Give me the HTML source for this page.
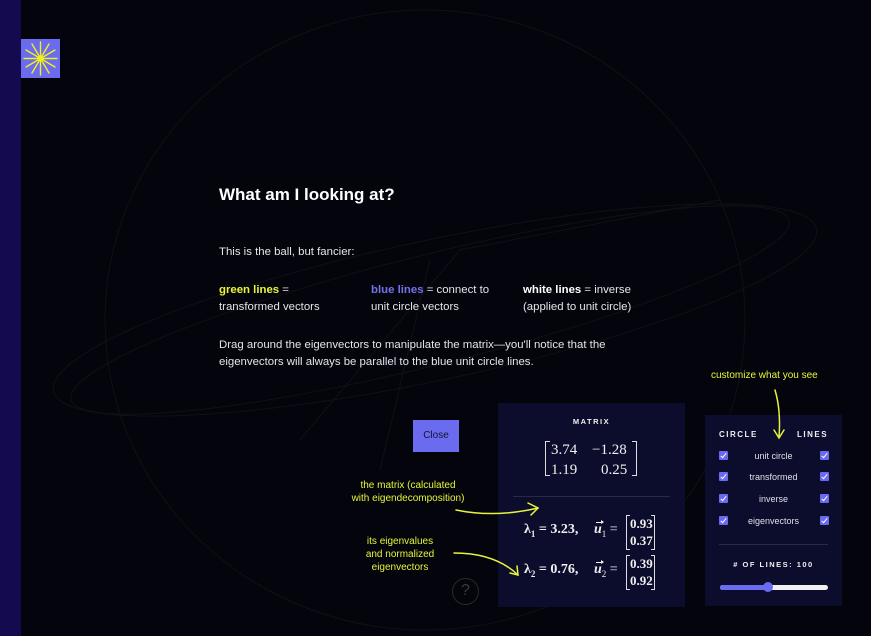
<!DOCTYPE html>
<html><head><meta charset="utf-8"><style>
*{margin:0;padding:0;box-sizing:border-box}
body{width:871px;height:636px;background:#04040c;position:relative;overflow:hidden;font-family:"Liberation Sans","DejaVu Sans",sans-serif;color:#e8e8f0}
.a{position:absolute}
.t{font-size:11.4px;line-height:17px;color:#e4e4ea}
.y{color:#e6f53a}
.b{color:#7373f0}
.serif{font-family:"Liberation Serif","DejaVu Serif",serif;color:#f0f0f0;white-space:nowrap}
.cb{position:absolute;width:9px;height:9px;background:#6a6af0;border-radius:1px}
.cb:after{content:"";position:absolute;left:3px;top:1px;width:2px;height:5px;border:solid #fff;border-width:0 1.5px 1.5px 0;transform:rotate(40deg)}
.lbl{position:absolute;font-size:9px;color:#e0e0e8;width:137px;text-align:center;left:0}
.cap{font-size:8px;font-weight:bold;letter-spacing:1.5px;color:#f0f0f0}
.brk{position:absolute;border:1px solid #ddd}
.u{position:relative;font-style:italic;font-weight:bold}
.u:before{content:"";position:absolute;left:2px;top:0px;width:7px;height:1px;background:#f0f0f0}
.u:after{content:"";position:absolute;left:7px;top:-2px;border-left:3px solid #f0f0f0;border-top:2.5px solid transparent;border-bottom:2.5px solid transparent}
</style></head><body>
<div class="a" style="left:0;top:0;width:21px;height:636px;background:#130a50"></div>
<svg class="a" style="left:0;top:0" width="871" height="636">
<g fill="none" stroke="#101016" stroke-width="1">
<ellipse cx="425" cy="320" rx="320" ry="310"/>
<ellipse cx="435" cy="310" rx="390" ry="70" transform="rotate(-12 435 310)"/>
<ellipse cx="430" cy="310" rx="370" ry="55" transform="rotate(-14 430 310)"/>
<path d="M300 440 L460 250 L720 200 M380 470 L430 260"/>
</g>
</svg>
<div class="a" style="left:21px;top:39px;width:39px;height:39px;background:#6b6bf0">
<svg width="39" height="39" viewBox="0 0 39 39"><g stroke="#f0f020" stroke-width="1.4" stroke-linecap="round">
<line x1="19.5" y1="3" x2="19.5" y2="36"/><line x1="3" y1="19.5" x2="36" y2="19.5"/>
<line x1="11" y1="5" x2="28" y2="34"/><line x1="28" y1="5" x2="11" y2="34"/>
<line x1="5" y1="11" x2="34" y2="28"/><line x1="34" y1="11" x2="5" y2="28"/>
</g><circle cx="19.5" cy="19.5" r="3" fill="#f0f020"/></svg></div>

<div class="a" style="left:219px;top:185px;font-size:17px;font-weight:bold;color:#fff">What am I looking at?</div>
<div class="a t" style="left:219px;top:244px">This is the ball, but fancier:</div>
<div class="a t" style="left:219px;top:282px"><b class="y">green lines</b> =<br>transformed vectors</div>
<div class="a t" style="left:371px;top:282px"><b class="b">blue lines</b> = connect to<br>unit circle vectors</div>
<div class="a t" style="left:523px;top:282px"><b style="color:#fff">white lines</b> = inverse<br>(applied to unit circle)</div>
<div class="a t" style="left:219px;top:337px;white-space:nowrap">Drag around the eigenvectors to manipulate the matrix—you'll notice that the<br>eigenvectors will always be parallel to the blue unit circle lines.</div>

<div class="a" style="left:413px;top:420px;width:46px;height:32px;background:#6b6bf0;color:#141430;font-size:10px;text-align:center;line-height:32px">Close</div>

<div class="a y" style="left:338px;top:479px;width:140px;text-align:center;font-size:10px;line-height:13px">the matrix (calculated<br>with eigendecomposition)</div>
<div class="a y" style="left:345px;top:535px;width:110px;text-align:center;font-size:10px;line-height:13px">its eigenvalues<br>and normalized<br>eigenvectors</div>
<div class="a y" style="left:711px;top:370px;font-size:10px">customize what you see</div>

<div class="a" style="left:452px;top:578px;width:27px;height:27px;border:1.5px solid #2a2a2a;border-radius:50%;color:#3a3a3a;font-size:16px;text-align:center;line-height:24px">?</div>

<div class="a" style="left:498px;top:403px;width:187px;height:204px;background:#0c0c2c">
<div class="a cap" style="left:0;width:187px;text-align:center;top:14px;font-size:7.5px">MATRIX</div>
<div class="brk" style="left:47px;top:38px;width:5px;height:35px;border-right:none"></div>
<div class="brk" style="left:134px;top:38px;width:5px;height:35px;border-left:none"></div>
<div class="a serif" style="left:53px;top:37px;font-size:15px;line-height:20px">3.74</div>
<div class="a serif" style="left:94px;top:37px;font-size:15px;line-height:20px">−1.28</div>
<div class="a serif" style="left:53px;top:57px;font-size:15px;line-height:20px">1.19</div>
<div class="a serif" style="left:103px;top:57px;font-size:15px;line-height:20px">0.25</div>
<div class="a" style="left:15px;top:93px;width:157px;height:1px;background:#2a2a48"></div>
<div class="a serif" style="left:26px;top:119px;font-size:14px;font-weight:bold">λ<sub style="font-size:9px">1</sub> = 3.23,</div>
<div class="a serif" style="left:96px;top:119px;font-size:14px"><span class="u">u</span><sub style="font-size:9px">1</sub> =</div>
<div class="brk" style="left:128px;top:112px;width:4px;height:35px;border-right:none"></div>
<div class="brk" style="left:153px;top:112px;width:4px;height:35px;border-left:none"></div>
<div class="a serif" style="left:132px;top:112px;font-size:13px;line-height:17px;font-weight:bold">0.93<br>0.37</div>
<div class="a serif" style="left:26px;top:159px;font-size:14px;font-weight:bold">λ<sub style="font-size:9px">2</sub> = 0.76,</div>
<div class="a serif" style="left:96px;top:159px;font-size:14px"><span class="u">u</span><sub style="font-size:9px">2</sub> =</div>
<div class="brk" style="left:128px;top:152px;width:4px;height:35px;border-right:none"></div>
<div class="brk" style="left:153px;top:152px;width:4px;height:35px;border-left:none"></div>
<div class="a serif" style="left:132px;top:152px;font-size:13px;line-height:17px;font-weight:bold">0.39<br>0.92</div>
</div>

<div class="a" style="left:705px;top:415px;width:137px;height:191px;background:#0c0c2c">
<div class="a cap" style="left:14px;top:15px">CIRCLE</div>
<div class="a cap" style="left:92px;top:15px">LINES</div>
<div class="cb" style="left:14px;top:36px"></div><div class="cb" style="left:115px;top:36px"></div><div class="lbl" style="top:36px">unit circle</div>
<div class="cb" style="left:14px;top:57px"></div><div class="cb" style="left:115px;top:57px"></div><div class="lbl" style="top:57px">transformed</div>
<div class="cb" style="left:14px;top:79px"></div><div class="cb" style="left:115px;top:79px"></div><div class="lbl" style="top:79px">inverse</div>
<div class="cb" style="left:14px;top:101px"></div><div class="cb" style="left:115px;top:101px"></div><div class="lbl" style="top:101px">eigenvectors</div>
<div class="a" style="left:14px;top:129px;width:109px;height:1px;background:#2a2a48"></div>
<div class="a cap" style="left:0;width:137px;text-align:center;top:145px;font-size:7.5px">#  OF LINES: 100</div>
<div class="a" style="left:15px;top:170px;width:108px;height:5px;background:#f0f0f0;border-radius:3px"></div>
<div class="a" style="left:15px;top:170px;width:48px;height:5px;background:#6b6bf0;border-radius:3px"></div>
<div class="a" style="left:58px;top:167px;width:10px;height:10px;background:#6b6bf0;border-radius:50%"></div>
</div>

<svg class="a" style="left:0;top:0" width="871" height="636"><g fill="none" stroke="#e6f53a" stroke-width="1.5" stroke-linecap="round">
<path d="M456 510 Q495 518 538 508"/><path d="M528 503 L538 508 L531 515"/>
<path d="M454 553 Q495 553 518 575"/><path d="M510 573 L518 575 L517 566"/>
<path d="M775 390 Q781 410 779 437"/><path d="M774 430 L779 438 L784 430"/>
</g></svg>
</body></html>
